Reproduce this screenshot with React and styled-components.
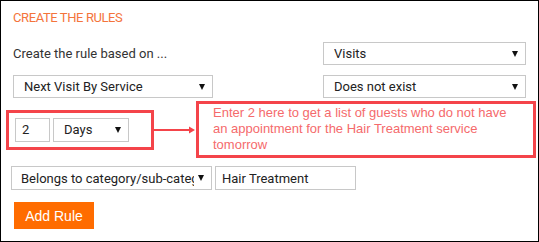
import React from "react"
import styled, { createGlobalStyle } from "styled-components"

const GlobalStyle = createGlobalStyle`
    html, body {
        margin: 0;
        padding: 0;
        background: #fff;
    }
    * {
        box-sizing: border-box;
    }
`

const Panel = styled.div`
    width: 539px;
    height: 242px;
    border: 1px solid #000;
    padding: 9px 12px 0 12px;
    font-family: Roboto, "Liberation Sans", sans-serif;
    font-size: 13px;
    color: #333;
    overflow: hidden;
`

const Title = styled.div`
    color: #f4743b;
    font-size: 13px;
    letter-spacing: -0.4px;
    line-height: 16px;
    text-transform: uppercase;
    margin-bottom: 16px;
`

const Row = styled.div`
    display: flex;
    align-items: center;
    justify-content: ${(p) => (p.$spread ? "space-between" : "flex-start")};
    gap: ${(p) => p.$gap || 0}px;
    margin-top: ${(p) => p.$top || 0}px;
    margin-left: ${(p) => p.$shift || 0}px;
`

const Label = styled.span`
    line-height: 16px;
    color: #333;
`

const SelectBox = styled.div`
    width: ${(p) => p.$w}px;
    height: ${(p) => p.$h || 23}px;
    border: 1px solid #c8c8c8;
    background: #fff;
    display: flex;
    align-items: center;
    padding: 0 7px 0 ${(p) => p.$pad || 10}px;
    color: #222;
    flex-shrink: 0;

    .value {
        flex: 1;
        min-width: 0;
        white-space: nowrap;
        overflow: hidden;
    }
`

const Caret = styled.span`
    width: 0;
    height: 0;
    margin-left: 4px;
    border-left: 3px solid transparent;
    border-right: 3px solid transparent;
    border-top: 6px solid #111;
    flex-shrink: 0;
`

const TextBox = styled.div`
    width: ${(p) => p.$w}px;
    height: ${(p) => p.$h || 24}px;
    border: 1px solid #c8c8c8;
    background: #fff;
    display: flex;
    align-items: center;
    padding-left: 6px;
    color: #222;
    flex-shrink: 0;
`

const Highlight = styled.div`
    width: 148px;
    height: 40px;
    border: 3px solid #f4444a;
    display: flex;
    align-items: center;
    gap: 3px;
    padding-left: 6px;
    flex-shrink: 0;
`

const Callout = styled.div`
    width: 340px;
    height: 57px;
    border: 3px solid #f4444a;
    padding: 1px 10px 0 14px;
    font-family: "Liberation Sans", Arial, sans-serif;
    font-size: 13px;
    line-height: 16px;
    color: #f56a6c;
    flex-shrink: 0;
`

const AddButton = styled.button`
    margin: 12px 0 0 1px;
    width: 80px;
    height: 27px;
    border: none;
    background: #ff6c00;
    color: #fff;
    font-family: "Liberation Sans", Arial, sans-serif;
    font-size: 14px;
    padding: 0;
    cursor: pointer;
`

const Select = ({ value, w, pad, h }) => (
    <SelectBox $w={w} $pad={pad} $h={h}>
        <span className="value">{value}</span>
        <Caret />
    </SelectBox>
)

const Arrow = () => (
    <svg width="42" height="10" viewBox="0 0 42 10" style={{ flexShrink: 0 }}>
        <line x1="0" y1="5" x2="36" y2="5" stroke="#f4444a" strokeWidth="2" />
        <polygon points="35,1.5 41,5 35,8.5" fill="#f4444a" />
    </svg>
)

export default function App() {
    return (
        <>
            <GlobalStyle />
            <Panel>
                <Title>Create the rules</Title>
                <Row $spread>
                    <Label>Create the rule based on ...</Label>
                    <Select value="Visits" w={203} />
                </Row>
                <Row $spread $top={10}>
                    <Select value="Next Visit By Service" w={200} />
                    <Select value="Does not exist" w={203} />
                </Row>
                <Row $top={3} $shift={-7}>
                    <Highlight>
                        <TextBox $w={35}>2</TextBox>
                        <Select value="Days" w={76} h={24} />
                    </Highlight>
                    <Arrow />
                    <Callout>
                        Enter 2 here to get a list of guests who do not have an
                        appointment for the Hair Treatment service tomorrow
                    </Callout>
                </Row>
                <Row $top={8} $shift={-2} $gap={3}>
                    <Select
                        value="Belongs to category/sub-category"
                        w={201}
                        h={24}
                        pad={9}
                    />
                    <TextBox $w={141}>Hair Treatment</TextBox>
                </Row>
                <AddButton>Add Rule</AddButton>
            </Panel>
        </>
    )
}
